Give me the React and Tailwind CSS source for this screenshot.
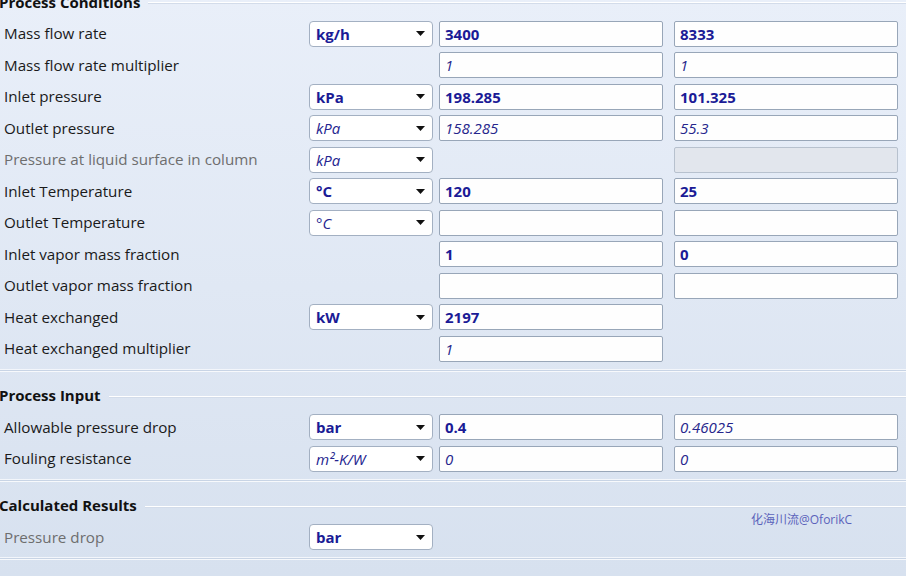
const conditions = [
  { label: "Mass flow rate", unit: "kg/h", a: "3400", b: "8333", bold: true },
  { label: "Mass flow rate multiplier", a: "1", b: "1" },
  { label: "Inlet pressure", unit: "kPa", a: "198.285", b: "101.325", bold: true },
  { label: "Outlet pressure", unit: "kPa", a: "158.285", b: "55.3" },
  { label: "Pressure at liquid surface in column", unit: "kPa", disabled: true, a: null, b: "", bDisabled: true },
  { label: "Inlet Temperature", unit: "°C", a: "120", b: "25", bold: true },
  { label: "Outlet Temperature", unit: "°C", a: "", b: "" },
  { label: "Inlet vapor mass fraction", a: "1", b: "0", bold: true },
  { label: "Outlet vapor mass fraction", a: "", b: "" },
  { label: "Heat exchanged", unit: "kW", a: "2197", b: null, bold: true },
  { label: "Heat exchanged multiplier", a: "1", b: null },
];

const inputs = [
  { label: "Allowable pressure drop", unit: "bar", a: "0.4", b: "0.46025", bold: true, bItalic: true },
  { label: "Fouling resistance", unit: "m²-K/W", a: "0", b: "0" },
];

const results = [{ label: "Pressure drop", unit: "bar", bold: true, disabled: true, a: null, b: null }];

function UnitSelect({ value, bold }) {
  return (
    <div className="w-[124px] h-[26px] flex items-center justify-between pl-[6px] pr-[7px] bg-white border border-[#a3b0c2] rounded-[4px]">
      <span className={bold ? "font-bold text-[15px] text-[#1b1b96]" : "italic text-[15px] text-[#24248f]"}>
        {value}
      </span>
      <svg width="9" height="5" viewBox="0 0 9 5">
        <path d="M0 0h9L4.5 5z" fill="#111" />
      </svg>
    </div>
  );
}

function ValueBox({ value, bold, disabled }) {
  if (value === null) return <div className="w-[224px]" />;
  return (
    <div
      className={`w-[224px] h-[26px] flex items-center px-[5px] border rounded-[2px] ${
        disabled ? "bg-[#e2e6ed] border-[#b7c1ce]" : "bg-[#fefefe] border-[#98a6b8]"
      }`}
    >
      <span className={bold ? "font-bold text-[15px] text-[#1b1b96]" : "italic text-[15px] text-[#26268c]"}>
        {value}
      </span>
    </div>
  );
}

function Row({ row }) {
  return (
    <div className="h-[31.5px] flex items-center">
      <div className={`w-[309px] pl-[4px] text-[15.2px] ${row.disabled ? "text-[#6e6e6e]" : "text-[#1a1a1a]"}`}>
        {row.label}
      </div>
      <div className="w-[124px]">{row.unit && <UnitSelect value={row.unit} bold={row.bold} />}</div>
      <div className="ml-[6px]">
        <ValueBox value={row.a} bold={row.bold} />
      </div>
      <div className="ml-[11px]">
        <ValueBox value={row.b} bold={row.bold && !row.bItalic} disabled={row.bDisabled} />
      </div>
    </div>
  );
}

function Section({ title, rows, children }) {
  return (
    <div className="relative pt-[14px] pb-[4px]">
      <div className="h-[20px] flex items-center -ml-[1px]">
        <span className="font-bold text-[15px] text-[#111]">{title}</span>
        <div className="flex-1 ml-[8px] mt-[2px]">
          <div className="h-px bg-white" />
          <div className="h-px bg-[#d3dcea]" />
        </div>
      </div>
      <div className="mt-[6px]">
        {rows.map((r) => (
          <Row key={r.label} row={r} />
        ))}
      </div>
      {children}
    </div>
  );
}

function Divider() {
  return (
    <div>
      <div className="h-px bg-[#f3f6fb]" />
      <div className="h-px bg-[#c8d4e5]" />
      <div className="h-px bg-[#f7f9fc]" />
    </div>
  );
}

export default function App() {
  return (
    <div
      className="w-[906px] h-[576px] overflow-hidden bg-gradient-to-b from-[#e9eff9] to-[#d7e1ef]"
      style={{ fontFamily: '"Open Sans", "Noto Sans CJK SC", sans-serif' }}
    >
      <div className="-mt-[22px]">
        <Section title="Process Conditions" rows={conditions} />
        <Divider />
        <Section title="Process Input" rows={inputs} />
        <Divider />
        <Section title="Calculated Results" rows={results}>
          <span className="absolute left-[751px] top-[29px] text-[12px] text-[#5b62bb]">化海川流@OforikC</span>
        </Section>
        <Divider />
      </div>
    </div>
  );
}
